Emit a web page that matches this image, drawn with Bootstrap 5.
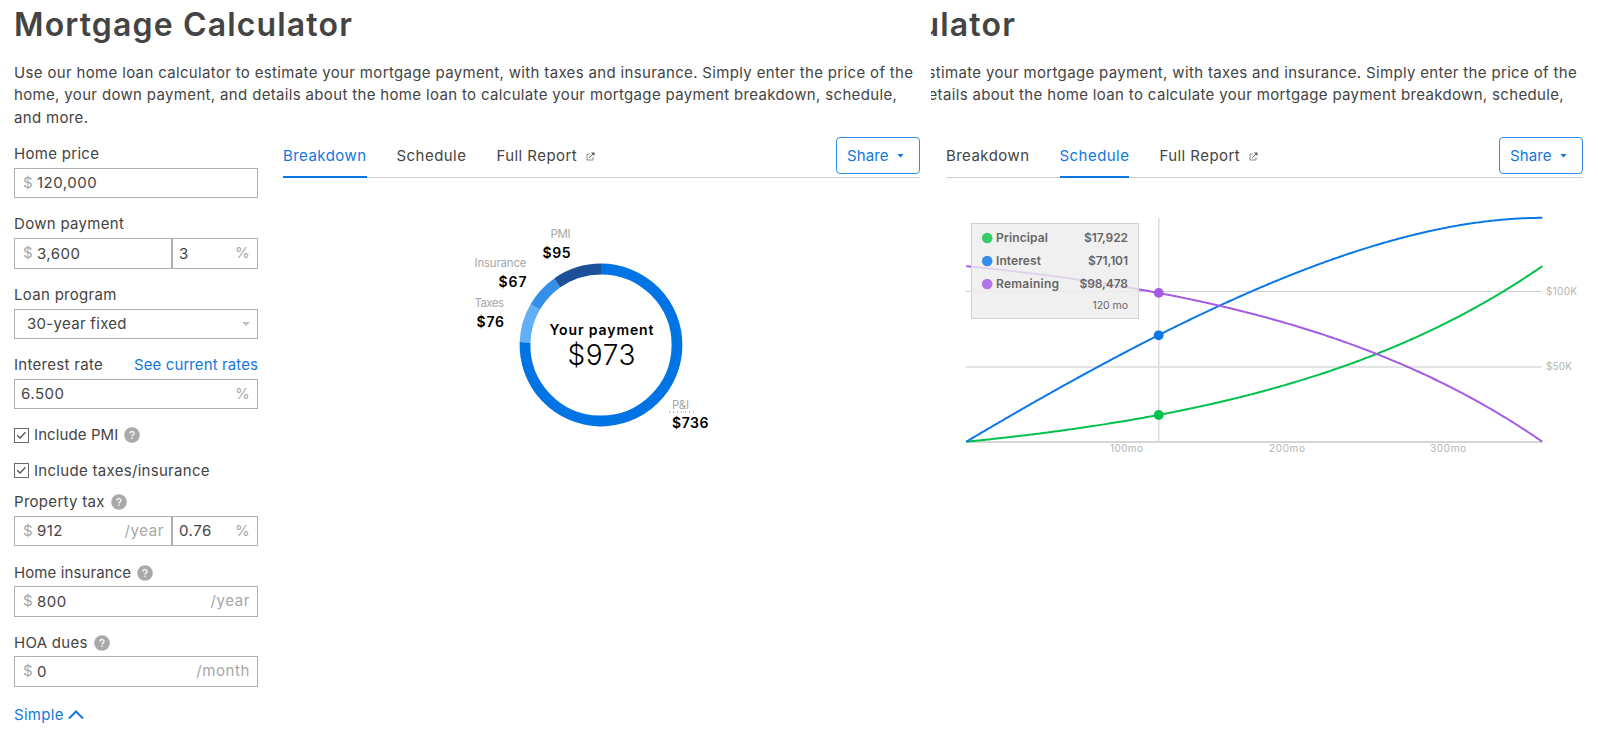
<!DOCTYPE html>
<html lang="en">

<head>
  <meta charset="UTF-8" />
  <meta name="viewport" content="width=device-width, initial-scale=1.0"/>
  <title>Mortgage Calculator</title>
  <link href="https://cdn.jsdelivr.net/npm/bootstrap@5.3.3/dist/css/bootstrap.min.css" rel="stylesheet">
  <style>
    body {
      font-family: Inter, "Noto Sans", sans-serif;
      font-size: 15px;
      letter-spacing: .3px;
      color: #444;
      background-color: #fff;
    }
    a { color: #1277e1; }
    .pane {
      height: 736px;
    }
    .pane-left {
      width: 931px;
      padding-left: 14px;
      padding-right: 11px;
    }
    .pane-right {
      width: 667px;
      padding-right: 15px;
    }
    .page-title {
      font-size: 32px;
      font-weight: 600;
      letter-spacing: 1.15px;
      line-height: 38px;
      padding-top: 6px;
      margin-bottom: 18px;
    }
    .intro {
      line-height: 22.3px;
      letter-spacing: .34px;
      height: 79px;
    }
    /* headings of the second pane run in from its left edge */
    .pane-right .page-title { width: 85px; }
    .intro-line { width: 646px; }
    .intro-line + .intro-line { width: 633px; }
    .sidebar {
      width: 244px;
      flex: none;
    }
    .content {
      width: 637px;
      flex: none;
      margin-left: 25px;
    }
    .pane-right .content { margin-left: 15px; }

    /* Form */
    .field { margin-bottom: 12.9px; }
    .field-label {
      height: 27px;
      line-height: 26px;
    }
    .box {
      height: 30.4px;
      border: 1px solid #b0b0b0;
      padding: 0 7px 0 8px;
    }
    .box + .box {
      width: 86px;
      flex: none;
      padding-left: 6px;
    }
    .box input {
      width: 80px;
      min-width: 0;
      border: 0;
      padding: 1px 0 0 4px;
      outline: 0;
      color: #444;
      letter-spacing: .5px;
    }
    .box .no-prefix {
      width: 48px;
      padding-left: 0;
    }
    .box-rate { padding-left: 6px; }
    .unit { color: #a7a7a7; }
    .wide-unit { letter-spacing: .6px; }
    .check-row { height: 35.8px; }
    .check-row svg { margin-right: 5px; }
    .tight { letter-spacing: .1px; }
    .help { margin-left: 6px; }
    .simple-link { margin-top: 17px; }

    /* Tabs */
    .tabs {
      height: 37px;
      border-bottom: 1px solid #d0d0d0;
    }
    .tabs .tab {
      height: 37px;
      line-height: 29px;
      margin-right: 30px;
      letter-spacing: .45px;
      color: #444;
      text-decoration: none;
      border-bottom: 2px solid transparent;
    }
    .tabs .tab.current {
      color: #1277e1;
      border-bottom-color: #0a75e6;
    }
    .btn-share {
      width: 84px;
      height: 37px;
      margin-top: -4.5px;
      padding: 2px 0 0 10px;
      font-size: 15px;
      color: #1277e1;
      border: 1px solid #2f8de9;
      border-radius: 4px;
      letter-spacing: .1px;
    }
    .chart text { letter-spacing: 0; }
    .axis-text {
      font-size: 10px;
      fill: #b4b4b4;
    }
    .slice-name {
      font-size: 11.5px;
      fill: #a7a7a7;
    }
    .slice-value {
      font-size: 14px;
      font-weight: 600;
      fill: #000;
    }
    .tip-text {
      font-size: 12px;
      font-weight: 600;
      fill: #666;
    }
  </style>
</head>
<body>

<!-- Shared icons -->
<svg class="d-none">
  <symbol id="icon-help" viewBox="0 0 16 16">
    <circle cx="8" cy="8" r="7.8" fill="#a9a9a9"/>
    <path d="M6 6.500C6 4 10 4 10 6.400C10 7.800 8 7.800 8 9.400M8 10.600V12" fill="none" stroke="#f2f2f2" stroke-width="1.500"/>
  </symbol>
  <symbol id="icon-check" viewBox="0 0 15 15">
    <rect x=".5" y=".5" width="14" height="14" fill="#fff" stroke="#6a6a6a"/>
    <path d="M3.200 7.200L6 10L11.500 4.200" fill="none" stroke="#555" stroke-width="1.300"/>
  </symbol>
  <symbol id="icon-external" viewBox="0 0 9 9">
    <path d="M3.500 2H1V8H7V5.200" fill="none" stroke="#8a8a8a" stroke-width="1"/>
    <path d="M3 6L7.500 1.500" fill="none" stroke="#666" stroke-width="1"/>
    <path d="M5 .5H8.500V4Z" fill="#555"/>
  </symbol>
  <symbol id="icon-caret" viewBox="0 0 6 4">
    <path d="M0 0H6L3 3.800Z" fill="currentColor"/>
  </symbol>
</svg>

<div class="d-flex overflow-hidden">

  <!-- Breakdown view -->
  <div class="pane pane-left overflow-hidden">
    <h1 class="page-title">Mortgage Calculator</h1>
    <p class="intro text-nowrap mb-0">Use our home loan calculator to estimate your mortgage payment, with taxes and insurance. Simply enter the price of the<br>home, your down payment, and details about the home loan to calculate your mortgage payment breakdown, schedule,<br>and more.</p>

    <div class="d-flex">
      <form class="sidebar">
        <div class="field">
          <div class="field-label">Home price</div>
          <div class="box d-flex align-items-center">
            <span class="unit">$</span><input value="120,000">
          </div>
        </div>

        <div class="field">
          <div class="field-label">Down payment</div>
          <div class="d-flex">
            <div class="box d-flex align-items-center flex-grow-1">
              <span class="unit">$</span><input value="3,600">
            </div>
            <div class="box d-flex align-items-center">
              <input class="no-prefix" value="3"><span class="unit ms-auto">%</span>
            </div>
          </div>
        </div>

        <div class="field">
          <div class="field-label">Loan program</div>
          <div class="box d-flex align-items-center justify-content-between">
            <span class="ms-1 ps-0">30-year fixed</span>
            <svg class="unit opacity-75" width="8" height="4" viewBox="0 0 8 4"><path d="M0 0H8L4 4Z" fill="currentColor"/></svg>
          </div>
        </div>

        <div class="field mb-2">
          <div class="field-label d-flex justify-content-between">
            <span>Interest rate</span>
            <a href="#" class="text-decoration-none tight">See current rates</a>
          </div>
          <div class="box box-rate d-flex align-items-center">
            <input class="no-prefix" value="6.500"><span class="unit ms-auto">%</span>
          </div>
        </div>

        <div class="check-row d-flex align-items-center tight">
          <svg width="15" height="15"><use href="#icon-check"/></svg>Include PMI
          <svg class="help" width="16" height="16"><use href="#icon-help"/></svg>
        </div>
        <div class="check-row d-flex align-items-center">
          <svg width="15" height="15"><use href="#icon-check"/></svg>Include taxes/insurance
        </div>

        <div class="field">
          <div class="field-label d-flex align-items-center">Property tax
            <svg class="help" width="16" height="16"><use href="#icon-help"/></svg>
          </div>
          <div class="d-flex">
            <div class="box d-flex align-items-center flex-grow-1">
              <span class="unit">$</span><input value="912"><span class="unit wide-unit ms-auto">/year</span>
            </div>
            <div class="box d-flex align-items-center">
              <input class="no-prefix" value="0.76"><span class="unit ms-auto">%</span>
            </div>
          </div>
        </div>

        <div class="field">
          <div class="field-label d-flex align-items-center"><span class="tight">Home insurance</span>
            <svg class="help" width="16" height="16"><use href="#icon-help"/></svg>
          </div>
          <div class="box d-flex align-items-center">
            <span class="unit">$</span><input value="800"><span class="unit wide-unit ms-auto">/year</span>
          </div>
        </div>

        <div class="field">
          <div class="field-label d-flex align-items-center">HOA dues
            <svg class="help" width="16" height="16"><use href="#icon-help"/></svg>
          </div>
          <div class="box d-flex align-items-center">
            <span class="unit">$</span><input value="0"><span class="unit wide-unit ms-auto">/month</span>
          </div>
        </div>

        <a href="#" class="simple-link d-flex align-items-center text-decoration-none">Simple
          <svg class="ms-1" width="16" height="10" fill="none" stroke="currentColor" stroke-width="2"><path d="M1 8.500L8 1.500L15 8.500"/></svg>
        </a>
      </form>

      <div class="content">
        <div class="tabs d-flex">
          <a href="#" class="tab current">Breakdown</a>
          <a href="#" class="tab">Schedule</a>
          <a href="#" class="tab">Full Report
            <svg class="ms-1" width="9" height="9"><use href="#icon-external"/></svg>
          </a>
          <button class="btn btn-share d-flex align-items-center ms-auto">Share
            <svg class="ms-2" width="7" height="4"><use href="#icon-caret"/></svg>
          </button>
        </div>

        <svg class="chart d-block" width="637" height="290" id="donut">
          <g class="slice-name">
            <text x="267.500" y="60" textLength="20">PMI</text>
            <text x="191.500" y="89" textLength="52">Insurance</text>
            <text x="191.500" y="129" textLength="29.500">Taxes</text>
            <text x="389" y="230.500" textLength="17">P&amp;I</text>
          </g>
          <path d="M386 234H413" stroke="#777" stroke-dasharray="1 3"/>
          <g class="slice-value">
            <text x="259.500" y="80" textLength="28">$95</text>
            <text x="215.500" y="109" textLength="28">$67</text>
            <text x="193.500" y="149" textLength="27.500">$76</text>
            <text x="389" y="250" textLength="36.500">$736</text>
            <text x="266.500" y="157" textLength="104">Your payment</text>
          </g>
          <text x="284.500" y="186.500" textLength="68" font-size="28" font-weight="300" fill="#000">$973</text>
        </svg>
      </div>
    </div>
  </div>

  <!-- Schedule view -->
  <div class="pane pane-right overflow-hidden">
    <h1 class="page-title d-flex justify-content-end">ulator</h1>
    <div class="intro text-nowrap">
      <div class="intro-line d-flex justify-content-end">stimate your mortgage payment, with taxes and insurance. Simply enter the price of the</div>
      <div class="intro-line d-flex justify-content-end">etails about the home loan to calculate your mortgage payment breakdown, schedule,</div>
    </div>

    <div class="content">
      <div class="tabs d-flex">
        <a href="#" class="tab">Breakdown</a>
        <a href="#" class="tab current">Schedule</a>
        <a href="#" class="tab">Full Report
          <svg class="ms-1" width="9" height="9"><use href="#icon-external"/></svg>
        </a>
        <button class="btn btn-share d-flex align-items-center ms-auto">Share
          <svg class="ms-2" width="7" height="4"><use href="#icon-caret"/></svg>
        </button>
      </div>

      <svg class="chart d-block" width="637" height="290">
        <path d="M20 113.500H596" stroke="#d0d0d0"/>
        <path d="M20 189H596" stroke="#e3e3e3" stroke-width="2"/>
        <path d="M20 264H596" stroke="#c8c8c8" stroke-width="1.500"/>
        <path d="M212.800 40V264" stroke="#dedede" stroke-width="1.500"/>
        <g id="lines" fill="none" stroke-width="2"></g>
        <g class="axis-text">
          <text x="600" y="117" textLength="31">$100K</text>
          <text x="600" y="192" textLength="26">$50K</text>
          <text x="164" y="274.300" textLength="33">100mo</text>
          <text x="323" y="274.300" textLength="36">200mo</text>
          <text x="484" y="274.300" textLength="36">300mo</text>
        </g>
        <!-- Tooltip -->
        <rect x="25.500" y="45.500" width="167" height="95" fill="#ededed" fill-opacity=".82" stroke="#d2d2d2"/>
        <circle cx="41.200" cy="60" r="5.300" fill="#36cc6a"/>
        <circle cx="41.200" cy="83" r="5.300" fill="#338fea"/>
        <circle cx="41.200" cy="106" r="5.300" fill="#b476e6"/>
        <g class="tip-text">
          <text x="50" y="64.300" textLength="52">Principal</text>
          <text x="50" y="87.300" textLength="45">Interest</text>
          <text x="50" y="110.300" textLength="63">Remaining</text>
          <text x="138" y="64.300" textLength="44">$17,922</text>
          <text x="142" y="87.300" textLength="40">$71,101</text>
          <text x="133.500" y="110.300" textLength="48.500">$98,478</text>
        </g>
        <text x="146.500" y="131" textLength="35.500" font-size="10.500" fill="#666">120 mo</text>
      </svg>
    </div>
  </div>
</div>

<script src="https://cdn.jsdelivr.net/npm/bootstrap@5.3.3/dist/js/bootstrap.bundle.min.js"></script>
<script>
(() => {
  const svgNs = "http://www.w3.org/2000/svg";

  function add(parent, name, attrs) {
    const el = document.createElementNS(svgNs, name);
    Object.keys(attrs).forEach(key => el.setAttribute(key, attrs[key]));
    parent.appendChild(el);
  }

  // Donut
  const slices = [
    { value: 736, color: "#0074e4" },
    { value: 76, color: "#62aef7" },
    { value: 67, color: "#338fe9" },
    { value: 95, color: "#1c5098" }
  ];
  const total = slices.reduce((sum, s) => sum + s.value, 0);
  const donut = document.getElementById("donut");
  let start = 0;
  slices.forEach(s => {
    const end = start + s.value / total * 2 * Math.PI;
    const point = a => `${318 + 76 * Math.sin(a)} ${167 - 76 * Math.cos(a)}`;
    add(donut, "path", {
      d: `M${point(start)}A76 76 0 ${end - start > Math.PI ? 1 : 0} 1 ${point(end)}`,
      fill: "none",
      stroke: s.color,
      "stroke-width": 10.8
    });
    start = end;
  });

  // Amortization schedule
  const loan = 116400, rate = 0.065 / 12, months = 360;
  const payment = loan * rate / (1 - Math.pow(1 + rate, -months));
  const x = m => 20.3 + m * 1.6;
  const y = v => 263.7 - v * 0.001508;
  let balance = loan, interest = 0;
  const series = [
    { color: "#00c14b", values: [0] },
    { color: "#0a78e8", values: [0] },
    { color: "#a65be3", values: [loan] }
  ];
  for (let m = 1; m <= months; m++) {
    interest += balance * rate;
    balance -= payment - balance * rate;
    series[0].values.push(loan - balance);
    series[1].values.push(interest);
    series[2].values.push(balance);
  }
  // the chart sits under the tooltip, so the lines go in before it
  const lines = document.getElementById("lines");
  series.forEach(s => {
    add(lines, "path", {
      d: "M" + s.values.map((v, m) => `${x(m).toFixed(1)} ${y(v).toFixed(2)}`).join("L"),
      stroke: s.color
    });
    add(lines, "circle", { cx: x(120) + 0.4, cy: y(s.values[120]), r: 4.9, fill: s.color });
  });
})();
</script>
</body>

</html>
